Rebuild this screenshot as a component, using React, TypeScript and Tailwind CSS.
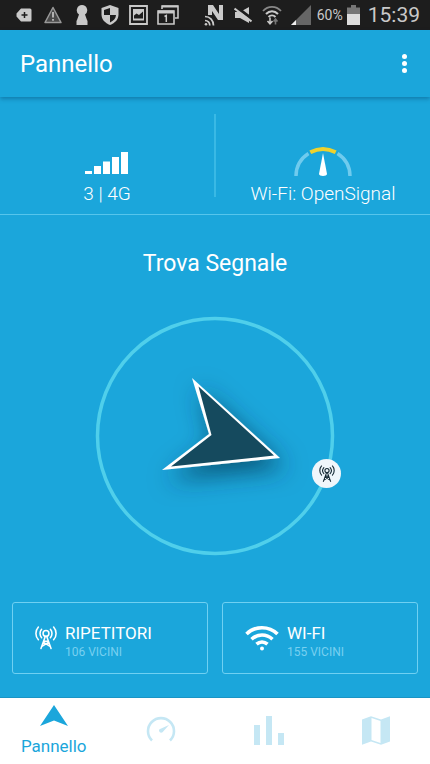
import type { ReactNode } from "react";

interface IconProps {
  className?: string;
}

function TowerIcon({ className }: IconProps) {
  return (
    <svg
      viewBox="0 0 24 26"
      className={className}
      fill="none"
      stroke="currentColor"
      strokeWidth="1.7"
      strokeLinecap="round"
      aria-hidden="true"
    >
      <circle cx="12" cy="8.5" r="3.2" />
      <path d="M7.2 4c-2.3 2.6-2.3 6.6 0 9.2M16.8 4c2.3 2.6 2.3 6.6 0 9.2" />
      <path d="M3.7 1.5c-3.6 4-3.6 10 0 14M20.3 1.5c3.6 4 3.6 10 0 14" />
      <path d="M11.2 12 6.500 25M12.8 12l4.700 13M9.800 17h4.400M9 18l7 4.500M15 18l-7 4.500" />
    </svg>
  );
}

function WifiIcon({ className }: IconProps) {
  return (
    <svg viewBox="0 0 34 26" className={className} fill="none" stroke="currentColor" aria-hidden="true">
      <path d="M1.500 9C10 .6 24 .6 32.500 9" strokeWidth="3.600" />
      <path d="M6.500 14.200c6-5.600 15-5.600 21 0" strokeWidth="3.600" />
      <path d="M11.500 19.200c3.400-3 7.600-3 11 0" strokeWidth="3.600" />
      <circle cx="17" cy="23.500" r="2" fill="currentColor" stroke="none" />
    </svg>
  );
}

function NotificationIcons() {
  return (
    <div className="grid w-[172px] grid-cols-6 place-items-center text-[#c9c9c9]" aria-hidden="true">
      <svg viewBox="0 0 16 14" className="h-3.5 w-4">
        <path d="M5 .5h9A1.500 1.500 0 0 1 15.500 2v10a1.500 1.500 0 0 1-1.500 1.500H5L.5 8.500v-3z" fill="currentColor" />
        <path d="M8.500 4v6M5.500 7h6" stroke="#1d1d1d" strokeWidth="1.500" />
      </svg>
      <svg viewBox="0 0 18 18" className="size-[18px]">
        <path d="M9 1.500 17 16.500H1z" fill="#4a4a4a" stroke="#999" strokeWidth="1.500" strokeLinejoin="round" />
        <path d="M9 6v5.500M9 13v1.800" stroke="#ccc" strokeWidth="1.600" />
      </svg>
      <svg viewBox="0 0 12 20" className="h-5 w-3">
        <path d="M6 0a5.300 5.300 0 0 1 3 9.600l2 5.400.5 1v4H.5v-4l.5-1 2-5.400A5.300 5.300 0 0 1 6 0z" fill="currentColor" />
      </svg>
      <svg viewBox="0 0 18 20" className="h-5 w-[18px]">
        <path d="M9 0 17.500 3v6.500c0 5-3.500 8.500-8.500 10.500C4 18 .5 14.500.5 9.500V3z" fill="currentColor" />
        <path d="M9 3v7H3V5zM9 10h6c-.2 3.500-2.500 5.800-6 7.500z" fill="#1d1d1d" />
      </svg>
      <svg viewBox="0 0 19 20" className="h-5 w-[19px]">
        <path d="M1 1h17v18H1z" fill="none" stroke="currentColor" strokeWidth="1.800" />
        <path d="M4 4h11v11.500H4z" fill="currentColor" />
        <path d="M5 13.500v-3l2.500-2 2.500 1.500 4-3.500v7z" fill="#1d1d1d" />
      </svg>
      <svg viewBox="0 0 22 20" className="h-5 w-[22px]" fill="none" stroke="currentColor">
        <path d="M5 4V1h16v12h-3" strokeWidth="1.600" />
        <path d="M5 1.500h16" strokeWidth="2" />
        <path d="M1 6h16v13H1z" strokeWidth="1.600" />
        <path d="M1 7h16" strokeWidth="3" />
        <path d="M7.500 11.500 9.300 10.500V17" strokeWidth="1.500" />
      </svg>
    </div>
  );
}

function StatusBar() {
  return (
    <div className="flex h-[30px] items-center justify-between bg-[#1d1d1d] px-2.5 text-[#c9c9c9]">
      <NotificationIcons />
      <div className="flex items-center">
        <div className="grid w-[116px] grid-cols-4 place-items-center" aria-hidden="true">
          <svg viewBox="0 0 20 21" className="h-[21px] w-5">
            <path d="M4 0h5l6 9V0h4v15h-5L8 6v4H4z" fill="currentColor" />
            <g fill="none" stroke="currentColor" strokeWidth="1.700">
              <path d="M1 11.500c5 0 8.500 4 8.500 9M1 15.500c2.800 0 4.800 2.200 4.800 5" />
            </g>
            <circle cx="2" cy="19.300" r="1.300" fill="currentColor" />
          </svg>
          <svg viewBox="0 0 18 18" className="size-[18px]">
            <path d="M1 6h5l9-5v16l-9-5H1z" fill="currentColor" />
            <path d="m1 0 17 13" stroke="#1d1d1d" strokeWidth="3" />
            <path d="m.5 2.500 17 13" stroke="currentColor" strokeWidth="2" />
          </svg>
          <svg viewBox="0 0 20 20" className="size-5" fill="none" stroke="currentColor">
            <path d="M1 6c5-5.500 13-5.500 18 0" strokeWidth="1.800" stroke="#888" />
            <path d="M4 9c3.500-3.800 8.500-3.800 12 0M6.500 12c2-2 5-2 7 0" strokeWidth="2" />
            <path d="M8 12.500V19M5.500 16 8 18.800l2.500-2.800" strokeWidth="1.600" />
            <path d="M13.500 19.500V14M11.500 16.500l2-2.500 2 2.500" strokeWidth="1.600" stroke="#777" />
          </svg>
          <svg viewBox="0 0 20 20" className="size-5">
            <path d="M20 0v20H0z" fill="#666" />
            <path d="M5 15v5H0z" fill="#eee" />
          </svg>
        </div>
        <span className="ml-px text-sm">60%</span>
        <svg viewBox="0 0 13 20" className="ml-1 h-5 w-[13px]" aria-hidden="true">
          <path d="M4 0h5v2.500h4V20H0V2.500h4z" fill="#777" />
          <path d="M0 9h13v11H0z" fill="#ddd" />
        </svg>
        <span className="ml-2 text-[21px] leading-none">15:39</span>
      </div>
    </div>
  );
}

function AppBar() {
  return (
    <header className="relative flex h-[67px] items-center justify-between px-5 shadow-[0_2px_4px_rgba(0,50,90,0.35)]">
      <h1 className="text-2xl">Pannello</h1>
      <button type="button" aria-label="Menu" className="flex w-3 flex-col items-center gap-0.5">
        <span className="size-[5px] rounded-full bg-white" />
        <span className="size-[5px] rounded-full bg-white" />
        <span className="size-[5px] rounded-full bg-white" />
      </button>
    </header>
  );
}

function ConnectionSummary() {
  return (
    <section className="flex h-[118px] border-b border-[#56c5ec] pt-[17px] text-[19px] leading-7 font-light">
      <div className="flex flex-1 flex-col items-center justify-end pb-1.5">
        <svg viewBox="0 0 44 22" className="h-[22px] w-11" fill="#fff" aria-hidden="true">
          <path d="M0 19h7v3H0zM9 14h7v8H9zM18 9.500h7V22h-7zM27 5h7v17h-7zM36 0h7v22h-7z" />
        </svg>
        <span className="mt-1.5">3 | 4G</span>
      </div>
      <div className="mb-[17px] w-0.5 bg-[#39b9e5]" />
      <div className="flex flex-1 flex-col items-center justify-end pb-1.5">
        <svg viewBox="0 0 58 30" className="h-[30px] w-[58px]" fill="none" aria-hidden="true">
          <path d="M2 30A27 27 0 0 1 14.500 7.500M43.500 7.500A27 27 0 0 1 56 30" stroke="#6fcbee" strokeWidth="3.500" />
          <path d="M16.300 6.300a27 27 0 0 1 25.400 0" stroke="#efd22d" strokeWidth="4" />
          <path d="m29 7 4 21c0 2.500-8 2.500-8 0z" fill="#fff" />
        </svg>
        <span className="mt-1">Wi-Fi: OpenSignal</span>
      </div>
    </section>
  );
}

function Compass() {
  return (
    <div className="relative mx-auto mt-[35px] size-60">
      <svg viewBox="0 0 240 240" className="size-full overflow-visible" aria-hidden="true">
        <defs>
          <filter id="arrow-shadow" x="-50%" y="-50%" width="200%" height="200%">
            <feDropShadow dx="6" dy="10" stdDeviation="12" floodColor="#04304a" floodOpacity="0.65" />
          </filter>
        </defs>
        <circle cx="120" cy="120" r="117.500" fill="none" stroke="#4fcfeb" strokeWidth="3.500" />
        <path d="M185 142 97 62l17 56-47 36z" fill="#fff" filter="url(#arrow-shadow)" />
        <path d="m179 139.500-75.500-69L116.500 119 76 150.500z" fill="#154a5e" />
      </svg>
      <span className="absolute top-[143px] left-[217px] flex size-[29px] items-center justify-center rounded-full bg-[#eff6fb] text-[#152a35]">
        <TowerIcon className="h-[17px] w-4" />
      </span>
    </div>
  );
}

interface NearbyButtonProps {
  icon: ReactNode;
  label: string;
  count: string;
}

function NearbyButton({ icon, label, count }: NearbyButtonProps) {
  return (
    <button
      type="button"
      className="flex h-[72px] flex-1 items-start gap-2 rounded-[3px] border border-[#6fd0f2] pt-5 pl-[22px] text-left"
    >
      <span className="pt-0.5">{icon}</span>
      <span className="flex flex-col">
        <span className="text-[17px] leading-5">{label}</span>
        <span className="text-xs leading-[18px] text-[#78d0f0]">{count}</span>
      </span>
    </button>
  );
}

function BottomNav() {
  return (
    <nav className="grid h-[67px] grid-cols-4 border-t border-[#1a94c4] bg-white text-[#c5e7f4]">
      <a href="#pannello" aria-current="page" className="flex flex-col items-center pt-[7px] text-[#1ba6db]">
        <svg viewBox="0 0 28 21" className="h-[21px] w-7" fill="currentColor" aria-hidden="true">
          <path d="m14 0 14 21-14-5.500L0 21z" />
        </svg>
        <span className="mt-2 text-[17px] leading-6">Pannello</span>
      </a>
      <a href="#velocita" aria-label="Velocità" className="flex items-center justify-center pb-1">
        <svg viewBox="0 0 30 26" className="h-[26px] w-[30px]" fill="none" aria-hidden="true">
          <path d="M6 24.500a13 13 0 1 1 18 0" stroke="currentColor" strokeWidth="2.600" />
          <path d="m23 9-6.500 7.300c-2 1.500-4.500-1-3-3z" fill="currentColor" />
        </svg>
      </a>
      <a href="#statistiche" aria-label="Statistiche" className="flex items-center justify-center pb-0.5">
        <svg viewBox="0 0 30 29" className="h-[29px] w-[30px]" fill="currentColor" aria-hidden="true">
          <path d="M0 9h6v20H0zM12 0h6v29h-6zM24 17h6v12h-6z" />
        </svg>
      </a>
      <a href="#mappa" aria-label="Mappa" className="flex items-center justify-center pb-0.5">
        <svg viewBox="0 0 30 29" className="h-[29px] w-[30px]" fill="currentColor" aria-hidden="true">
          <path d="M1 3.500 10 .2l10 3.200L29 .2V25.500l-9 3.300-10-3.300-9 3.300zM10.500 2v22l9 3V5z" fillRule="evenodd" />
        </svg>
      </a>
    </nav>
  );
}

export default function App() {
  return (
    <div className="flex min-h-screen flex-col bg-[#1ba6db] font-['Roboto',sans-serif] text-white">
      <StatusBar />
      <AppBar />
      <main className="flex flex-1 flex-col">
        <ConnectionSummary />
        <h2 className="mt-8 text-center text-[23px] leading-[34px]">Trova Segnale</h2>
        <Compass />
        <div className="mt-auto mb-[23px] flex gap-3.5 px-3">
          <NearbyButton icon={<TowerIcon className="h-[25px] w-[22px]" />} label="RIPETITORI" count="106 VICINI" />
          <NearbyButton icon={<WifiIcon className="h-[26px] w-[34px]" />} label="WI-FI" count="155 VICINI" />
        </div>
      </main>
      <BottomNav />
    </div>
  );
}
